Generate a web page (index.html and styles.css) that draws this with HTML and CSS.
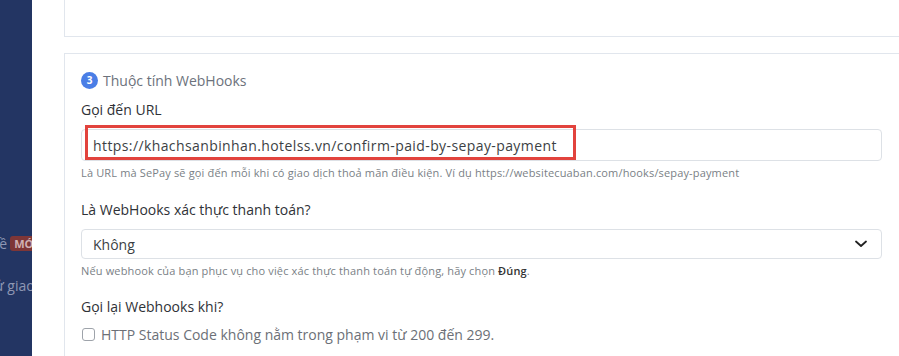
FILE: index.html
```html
<!DOCTYPE html>
<html lang="vi">
<head>
<meta charset="utf-8">
<title>WebHooks</title>
<link rel="stylesheet" href="styles.css">
</head>
<body>
<div class="layout">
  <aside class="sidebar">
    <div class="nav-item nav-first">Cập nhật về <span class="nav-badge">MỚI</span></div>
    <div class="nav-item nav-second">Lịch sử giao dịch</div>
  </aside>
  <main class="main">
    <section class="card card-top">
      <p class="top-text">Chọn tài khoản ngân hàng áp dụng cho WebHooks này. Nếu chưa có, vui lòng <span class="link">thêm tài khoản</span></p>
    </section>
    <section class="card card-form">
      <div class="step-title"><span class="step-num">3</span>Thuộc tính WebHooks</div>

      <div class="field">
        <label class="field-label">Gọi đến URL</label>
        <div class="input-wrap">
          <div class="input">https://khachsanbinhan.hotelss.vn/confirm-paid-by-sepay-payment</div>
          <div class="highlight"></div>
        </div>
        <div class="help">Là URL mà SePay sẽ gọi đến mỗi khi có giao dịch thoả mãn điều kiện. Ví dụ https://websitecuaban.com/hooks/sepay-payment</div>
      </div>

      <div class="field">
        <label class="field-label">Là WebHooks xác thực thanh toán?</label>
        <div class="select">
          <span>Không</span>
          <svg class="chevron" width="12" height="8" viewBox="0 0 12 8"><path d="M1 1.5 L6 6 L11 1.5" fill="none" stroke="#222" stroke-width="1.8" stroke-linecap="round" stroke-linejoin="round"/></svg>
        </div>
        <div class="help">Nếu webhook của bạn phục vụ cho việc xác thực thanh toán tự động, hãy chọn <b>Đúng</b>.</div>
      </div>

      <div class="field">
        <label class="field-label">Gọi lại Webhooks khi?</label>
        <div class="check-row"><span class="checkbox"></span>HTTP Status Code không nằm trong phạm vi từ 200 đến 299.</div>
      </div>
    </section>
  </main>
</div>
</body>
</html>
```

FILE: styles.css
```css
* { box-sizing: border-box; }
html, body {
  margin: 0;
  padding: 0;
  width: 899px;
  height: 356px;
  overflow: hidden;
  background: #ffffff;
  font-family: "Open Sans", "Noto Sans", sans-serif;
}
.layout {
  display: flex;
  height: 356px;
}
.sidebar {
  width: 32px;
  flex: 0 0 32px;
  background: #233563;
  overflow: hidden;
  color: #8e97b3;
  font-size: 14px;
  white-space: nowrap;
  padding-top: 234px;
}
.nav-item {
  display: flex;
  align-items: center;
  height: 18px;
}
.nav-first { margin-left: -70px; }
.nav-second { margin-left: -42px; margin-top: 24px; }
.nav-badge {
  background: #7e3637;
  color: #d1b1b3;
  font-size: 11px;
  font-weight: 700;
  padding: 0 4px;
  border-radius: 3px;
  margin-left: 3px;
  line-height: 15px;
}
.main {
  flex: 1;
  padding-left: 32px;
  overflow: hidden;
}
.card {
  border: 1px solid #e1e6ed;
  border-right: none;
  background: #fff;
}
.card-top {
  border-top: none;
  height: 37px;
  padding: 0 17px;
  overflow: hidden;
}
.top-text {
  margin: -16px 0 0;
  font-size: 12px;
  color: #555;
  line-height: 16px;
  white-space: nowrap;
}
.link { color: #3b6fe0; }
.card-form {
  margin-top: 16px;
  padding: 17px 17px 0 16px;
  height: 330px;
}
.step-title {
  display: flex;
  align-items: center;
  font-size: 14px;
  color: #6c727c;
  height: 18px;
}
.step-num {
  width: 17px;
  height: 17px;
  border-radius: 50%;
  background: #4a7ee6;
  color: #fff;
  font-size: 10px;
  font-weight: 700;
  display: inline-flex;
  align-items: center;
  justify-content: center;
  margin-right: 5px;
}
.field { margin-top: 11px; }
.field + .field { margin-top: 20px; }
.field:last-child { margin-top: 19px; }
.field-label {
  display: block;
  font-size: 14px;
  font-weight: 500;
  color: #2f3237;
  line-height: 20px;
  margin-bottom: 9px;
}
.input-wrap { position: relative; }
.input, .select {
  border: 1px solid #dde1e6;
  border-radius: 4px;
  font-size: 14px;
  color: #3c3f44;
  padding: 0 11px;
  display: flex;
  align-items: center;
}
.input { height: 32px; letter-spacing: 0.4px; }
.select {
  height: 30px;
  justify-content: space-between;
  padding-right: 14px;
}
.chevron { display: block; }
.highlight {
  position: absolute;
  left: 4px;
  top: -4px;
  width: 491px;
  height: 35px;
  border: 3px solid #e2433d;
}
.help {
  font-size: 11px;
  letter-spacing: 0.15px;
  color: #7a7f86;
  margin-top: 4px;
  line-height: 15px;
}
.help b { color: #333; font-weight: 600; }
.check-row {
  display: flex;
  align-items: center;
  font-size: 14px;
  color: #6c7077;
  margin-top: -1px;
}
.checkbox {
  width: 13px;
  height: 13px;
  border: 1px solid #9ea3aa;
  border-radius: 3px;
  margin-left: 1px;
  margin-right: 6px;
  background: #fff;
}
```
